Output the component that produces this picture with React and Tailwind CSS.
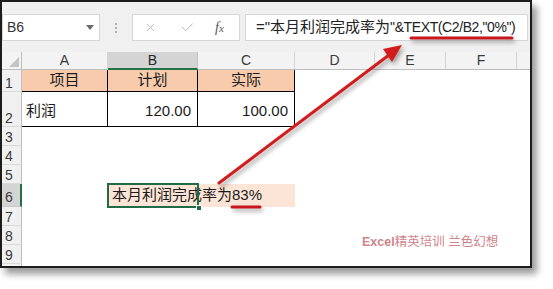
import { X, Check } from 'lucide-react';

const App = () => {
    const emptyRows = [
        { n: 3, h: 'h-[19px]' },
        { n: 4, h: 'h-[19px]' },
        { n: 5, h: 'h-[19px]' },
    ];
    const lowerRows = [
        { n: 7, h: 'h-[19px]' },
        { n: 8, h: 'h-[19px]' },
        { n: 9, h: 'h-[19px]' },
    ];

    const rowHead = 'w-[20px] shrink-0 bg-[#f0f0f0] border-r border-b border-r-[#bfbfbf] border-b-[#d9d9d9] text-[14px] text-[#3a3a3a] pl-[3px] flex items-end pb-[1px] leading-none';

    const blankCells = (
        <>
            <div className="w-[86px] shrink-0" />
            <div className="w-[90px] shrink-0" />
            <div className="w-[97px] shrink-0" />
            <div className="flex-1" />
        </>
    );

    return (
        <div className="relative w-[553px] h-[289px] bg-white overflow-hidden font-['Liberation_Sans','Noto_Sans_CJK_SC',sans-serif] text-[#1b1b1b]">
            {/* Excel window */}
            <div className="w-[532px] h-[268px] border-2 border-[#1c1c1c] shadow-[5px_6px_7px_rgba(0,0,0,0.4)] flex flex-col bg-white overflow-hidden">
                {/* Formula bar */}
                <div className="h-[50px] shrink-0 bg-[#f0f0f0] flex items-start pt-[12px]">
                    <div className="w-[98px] h-[27px] bg-white border border-[#d6d6d6] flex items-center justify-between pl-[4px] pr-[5px] text-[14px] text-[#333]">
                        <span>B6</span>
                        <svg width="8" height="5" viewBox="0 0 8 5"><polygon points="0,0 8,0 4,5" fill="#6b6b6b" /></svg>
                    </div>
                    <div className="w-[32px] h-[27px] flex flex-col items-center justify-center gap-[2px]">
                        <span className="w-[2px] h-[2px] bg-[#b0b0b0]" />
                        <span className="w-[2px] h-[2px] bg-[#b0b0b0]" />
                        <span className="w-[2px] h-[2px] bg-[#b0b0b0]" />
                    </div>
                    <div className="w-[108px] h-[27px] bg-white border border-[#d6d6d6] flex items-center pl-[11px]">
                        <X size={13} strokeWidth={1.4} className="text-[#ababab]" />
                        <Check size={15} strokeWidth={1.4} className="text-[#ababab] ml-[23px]" />
                        <span className="ml-[20px] font-['Liberation_Serif',serif] italic text-[14px] text-[#555]">f<span className="text-[11px]">x</span></span>
                    </div>
                    <div className="ml-[5px] mr-[2px] flex-1 h-[27px] bg-white border border-[#d6d6d6] pl-[10px] flex items-center text-[15px] whitespace-nowrap text-[#222]">
                        <span>="本月利润完成率为</span>
                        <span className="text-[14px] tracking-[-0.4px]">"&amp;TEXT(C2/B2,"0%")</span>
                    </div>
                </div>

                {/* Column headers */}
                <div className="h-[18px] shrink-0 flex bg-[#f3f3f3] text-[14px] text-[#3a3a3a] leading-[17px]">
                    <div className="w-[20px] shrink-0 border-r border-b border-[#bfbfbf] flex items-end justify-end pr-[2px] pb-[2px]">
                        <svg width="10" height="10" viewBox="0 0 10 10"><polygon points="10,0 10,10 0,10" fill="#c4c4c4" /></svg>
                    </div>
                    <div className="w-[86px] shrink-0 border-r border-b border-r-[#d4d4d4] border-b-[#bfbfbf] text-center">A</div>
                    <div className="w-[90px] shrink-0 bg-[#d4d4d4] border-r border-r-[#c2c2c2] border-b-2 border-b-[#217346] text-center text-[#262626]">B</div>
                    <div className="w-[97px] shrink-0 border-r border-b border-r-[#d4d4d4] border-b-[#bfbfbf] text-center">C</div>
                    <div className="w-[80px] shrink-0 border-r border-b border-r-[#d4d4d4] border-b-[#bfbfbf] text-center">D</div>
                    <div className="w-[71px] shrink-0 border-r border-b border-r-[#d4d4d4] border-b-[#bfbfbf] text-center">E</div>
                    <div className="w-[71px] shrink-0 border-r border-b border-r-[#d4d4d4] border-b-[#bfbfbf] text-center">F</div>
                    <div className="flex-1 border-b border-[#bfbfbf]" />
                </div>

                {/* Row 1 */}
                <div className="h-[22px] shrink-0 flex text-[15px]">
                    <div className={rowHead}>1</div>
                    <div className="w-[86px] shrink-0 bg-[#f8cbad] border-r border-b border-black flex items-center justify-center">项目</div>
                    <div className="w-[90px] shrink-0 bg-[#f8cbad] border-r border-b border-black flex items-center justify-center">计划</div>
                    <div className="w-[97px] shrink-0 bg-[#f8cbad] border-r border-b border-black flex items-center justify-center">实际</div>
                    <div className="flex-1" />
                </div>

                {/* Row 2 */}
                <div className="h-[35px] shrink-0 flex text-[15px]">
                    <div className={rowHead}>2</div>
                    <div className="w-[86px] shrink-0 border-r border-b border-black flex items-center pl-[4px] pt-[4px]">利润</div>
                    <div className="w-[90px] shrink-0 border-r border-b border-black flex items-center justify-end pr-[6px] pt-[4px]">120.00</div>
                    <div className="w-[97px] shrink-0 border-r border-b border-black flex items-center justify-end pr-[6px] pt-[4px]">100.00</div>
                    <div className="flex-1" />
                </div>

                {emptyRows.map((r) => (
                    <div key={r.n} className={`${r.h} shrink-0 flex`}>
                        <div className={rowHead}>{r.n}</div>
                        {blankCells}
                    </div>
                ))}

                {/* Row 6 */}
                <div className="h-[23px] shrink-0 flex text-[15px]">
                    <div className="w-[20px] shrink-0 bg-[#d4d4d4] border-r-2 border-r-[#217346] border-b border-b-[#c8c8c8] text-[14px] text-[#3a3a3a] pl-[3px] flex items-end pb-[2px] leading-none">6</div>
                    <div className="w-[86px] shrink-0" />
                    <div className="relative w-[90px] shrink-0 bg-[#fce4d6] flex items-center pl-[4px] whitespace-nowrap">
                        本月利润完成率为83%
                        <div className="absolute -left-[1px] -top-[1px] w-[92px] h-[25px] border-2 border-[#1f6b43]" />
                        <div className="absolute -right-[4px] -bottom-[4px] w-[6px] h-[6px] bg-[#1f6b43] border border-white" />
                    </div>
                    <div className="w-[97px] shrink-0 bg-[#fce4d6]" />
                    <div className="flex-1" />
                </div>

                {lowerRows.map((r) => (
                    <div key={r.n} className={`${r.h} shrink-0 flex`}>
                        <div className={rowHead}>{r.n}</div>
                        {blankCells}
                    </div>
                ))}
                <div className="flex-1 flex">
                    <div className="w-[20px] shrink-0 bg-[#f0f0f0] border-r border-[#bfbfbf]" />
                </div>
            </div>

            {/* Watermark */}
            <div className="absolute left-[362px] top-[233px] text-[12.5px] text-[#d0848a] whitespace-nowrap">
                <span className="font-bold">Excel</span>精英培训 兰色幻想
            </div>

            {/* Annotation arrow and underlines */}
            <svg className="absolute inset-0 pointer-events-none [filter:drop-shadow(2px_3px_2px_rgba(0,0,0,0.35))]" width="553" height="289" viewBox="0 0 553 289">
                <line x1="219" y1="183" x2="389" y2="55" stroke="#d41c1c" strokeWidth="3" strokeLinecap="round" />
                <polygon points="402,45 392,62 383,49" fill="#d41c1c" />
                <line x1="411" y1="38" x2="512" y2="38" stroke="#c8161d" strokeWidth="3" strokeLinecap="round" />
                <line x1="232" y1="207" x2="260" y2="207" stroke="#c8161d" strokeWidth="3" strokeLinecap="round" />
            </svg>
        </div>
    );
};

export default App;
